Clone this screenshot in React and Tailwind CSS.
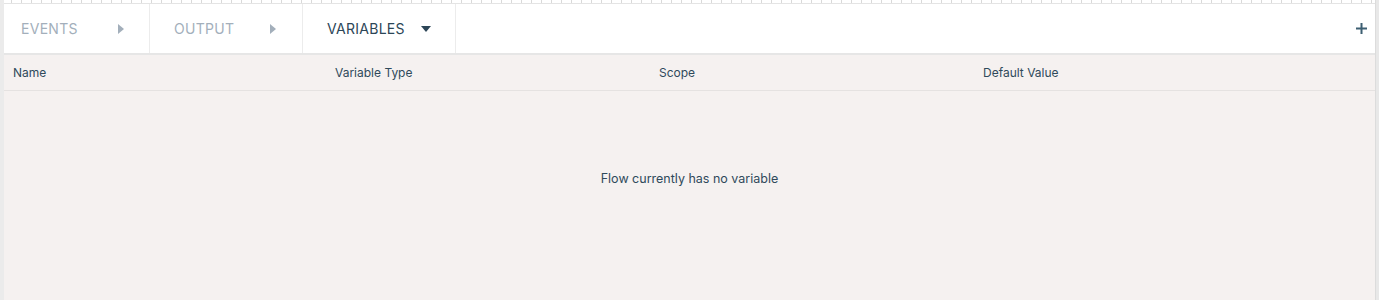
// App.jsx — flow editor bottom panel, variables tab
import React from 'react'

const tabs = [
  { label: 'EVENTS', active: false, pl: 'pl-[17px]', pr: 'pr-[25px]', w: 'w-[146px]' },
  { label: 'OUTPUT', active: false, pl: 'pl-[24px]', pr: 'pr-[26px]', w: 'w-[153px]' },
  { label: 'VARIABLES', active: true, pl: 'pl-[24px]', pr: 'pr-[24px]', w: 'w-[153px]' },
]

const columns = ['Name', 'Variable Type', 'Scope', 'Default Value']

// Small caret, pointing right for collapsed tabs and down for the active one
function Caret({ down }) {
  if (down) return (
    <svg width="10" height="6" viewBox="0 0 10 6"><path d="M0 0h10L5 6z" fill="#2c4657" /></svg>
  )
  return (
    <svg width="6" height="10" viewBox="0 0 6 10"><path d="M0 0l6 5-6 5z" fill="#a3afbb" /></svg>
  )
}

export default function App() {
  return (
    <div className="w-[1379px] h-[300px] flex bg-white font-['Inter',sans-serif] overflow-hidden">
      <div className="w-[4px] bg-[#ebebeb] shrink-0" />

      <div className="flex-1 flex flex-col min-w-0">
        {/* Dotted ruler strip on top */}
        <div className="h-[4px] shrink-0 border-b border-[#e4e4e4] bg-[repeating-linear-gradient(90deg,transparent_0px,transparent_7px,#d9d9d9_7px,#d9d9d9_8px,transparent_8px,transparent_10px)]" />

        {/* Tab bar */}
        <div className="h-[51px] shrink-0 flex bg-white border-b-2 border-[#e6e6e6]">
          {tabs.map(t => (
            <div key={t.label}
              className={`${t.w} ${t.pl} ${t.pr} flex items-center justify-between border-r border-[#ececec]`}>
              <span className={`text-[14px] tracking-[0.02em] ${t.active ? 'text-[#2c4657]' : 'text-[#a3afbb]'}`}>{t.label}</span>
              <Caret down={t.active} />
            </div>
          ))}
          <div className="flex-1 flex items-center justify-end pr-[8px]">
            <svg width="11" height="11" viewBox="0 0 11 11">
              <path d="M5.5 0v11M0 5.5h11" stroke="#3d5f72" strokeWidth="2" />
            </svg>
          </div>
        </div>

        {/* Table header */}
        <div className="h-[36px] shrink-0 grid grid-cols-[322px_324px_324px_1fr] items-center pl-[9px] bg-[#f5f1f0] border-b border-[#e5e2e1]">
          {columns.map(c => (
            <span key={c} className="text-[12px] text-[#2f4a5b]">{c}</span>
          ))}
        </div>

        {/* Empty state */}
        <div className="flex-1 bg-[#f5f1f0] flex justify-center pt-[79px]">
          <span className="text-[12.5px] text-[#2f4a5b] h-fit">Flow currently has no variable</span>
        </div>
      </div>

      <div className="w-[4px] bg-[#e8e8e8] border-l border-[#dcdcdc] shrink-0" />
    </div>
  )
}
